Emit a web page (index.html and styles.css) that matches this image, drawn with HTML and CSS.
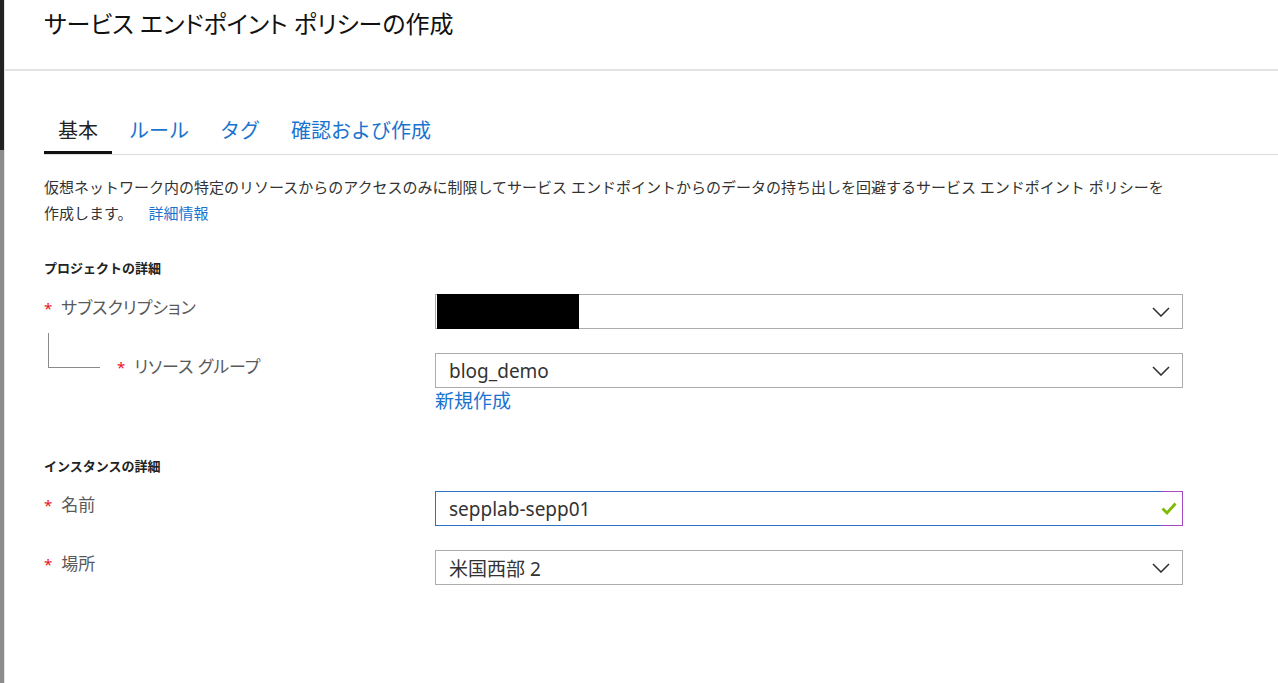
FILE: index.html
```html
<!DOCTYPE html>
<html lang="ja">
<head>
    <meta charset="UTF-8">
    <meta name="viewport" content="width=device-width, initial-scale=1.0">
    <title>サービス エンドポイント ポリシーの作成</title>
    <link rel="stylesheet" href="styles.css">
</head>
<body>
    <div class="frame">
        <div class="edge"></div>

        <div class="blade">
            <header class="blade-header">
                <h1>サービス エンドポイント ポリシーの作成</h1>
            </header>

            <div class="blade-body">
                <nav class="tabs">
                    <a class="tab active">基本</a>
                    <a class="tab">ルール</a>
                    <a class="tab">タグ</a>
                    <a class="tab">確認および作成</a>
                </nav>

                <p class="intro">
                    仮想ネットワーク内の特定のリソースからのアクセスのみに制限してサービス エンドポイントからのデータの持ち出しを回避するサービス エンドポイント ポリシーを作成します。<a class="link more-link">詳細情報</a>
                </p>

                <h2 class="section-title">プロジェクトの詳細</h2>

                <div class="form-row first">
                    <div class="field-label">
                        <span class="label-text"><span class="req">*</span>サブスクリプション</span>
                    </div>
                    <div class="select">
                        <span class="redact"></span>
                        <svg class="chevron" width="18" height="10" viewBox="0 0 18 10"><polyline points="1,1 9,9 17,1"/></svg>
                    </div>
                </div>

                <div class="form-row">
                    <div class="field-label">
                        <span class="tree"></span>
                        <span class="label-text"><span class="req">*</span>リソース グループ</span>
                    </div>
                    <div class="control">
                        <div class="select">
                            <span>blog_demo</span>
                            <svg class="chevron" width="18" height="10" viewBox="0 0 18 10"><polyline points="1,1 9,9 17,1"/></svg>
                        </div>
                        <a class="link new-link">新規作成</a>
                    </div>
                </div>

                <h2 class="section-title second">インスタンスの詳細</h2>

                <div class="form-row tight">
                    <div class="field-label">
                        <span class="label-text"><span class="req">*</span>名前</span>
                    </div>
                    <div class="text-field">
                        <span class="value">sepplab-sepp01</span>
                        <span class="valid-mark">
                            <svg width="16" height="13" viewBox="0 0 16 13"><polyline points="1.5,6.5 6,11 14.5,1.5"/></svg>
                        </span>
                    </div>
                </div>

                <div class="form-row">
                    <div class="field-label">
                        <span class="label-text"><span class="req">*</span>場所</span>
                    </div>
                    <div class="select">
                        <span>米国西部 2</span>
                        <svg class="chevron" width="18" height="10" viewBox="0 0 18 10"><polyline points="1,1 9,9 17,1"/></svg>
                    </div>
                </div>
            </div>
        </div>
    </div>
</body>
</html>
```

FILE: styles.css
```css
* {
    margin: 0;
    padding: 0;
    box-sizing: border-box;
    font-family: "Noto Sans", "Noto Sans CJK JP", sans-serif;
}

body {
    background-color: white;
    color: #222;
}

.frame {
    display: flex;
    min-height: 100vh;
}

/* bord gauche de la fenêtre */
.edge {
    width: 5px;
    flex-shrink: 0;
    background: linear-gradient(#222 0 150px, #8c8c8c 150px);
    border-right: 1px solid #e4e4e4;
}

.blade {
    flex: 1;
}

.blade-header {
    height: 71px;
    padding: 8px 0 0 39px;
    border-bottom: 2px solid #e3e3e3;
}

.blade-header h1 {
    font-size: 24px;
    font-weight: normal;
    line-height: 32px;
    color: #111;
    font-feature-settings: "palt";
}

.blade-body {
    padding-left: 39px;
}

/* onglets */
.tabs {
    display: flex;
    margin-top: 38px;
    border-bottom: 1px solid #dcdcdc;
}

.tab {
    font-size: 20px;
    line-height: 28px;
    padding: 8px 14px 6px;
    margin-right: 3px;
    color: #1a73d0;
    border-bottom: 3px solid transparent;
}

.tab.active {
    color: #222;
    border-bottom-color: #111;
}

.intro {
    margin-top: 19px;
    max-width: 1130px;
    font-size: 15px;
    line-height: 26px;
    color: #333;
}

.link {
    color: #1a73d0;
}

.more-link {
    margin-left: 16px;
}

.section-title {
    margin-top: 32px;
    font-size: 13px;
    font-weight: bold;
    line-height: 20px;
    color: #222;
}

.section-title.second {
    margin-top: 42px;
}

/* lignes du formulaire */
.form-row {
    display: flex;
    margin-top: 24px;
}

.form-row.first {
    margin-top: 16px;
}

.form-row.tight {
    margin-top: 15px;
}

.field-label {
    display: flex;
    width: 391px;
    flex-shrink: 0;
}

.label-text {
    padding-top: 3px;
    font-size: 17px;
    line-height: 22px;
    color: #595959;
    font-feature-settings: "palt";
}

.req {
    font-size: 15px;
    color: #e81123;
    margin-right: 9px;
}

.tree {
    width: 52px;
    height: 35px;
    margin: -20px 17px 0 4px;
    border-left: 1px solid #8a8a8a;
    border-bottom: 1px solid #8a8a8a;
}

.control {
    display: flex;
    flex-direction: column;
}

.select {
    display: flex;
    align-items: center;
    justify-content: space-between;
    width: 748px;
    height: 35px;
    padding: 0 12px 0 13px;
    border: 1px solid #acacac;
    font-size: 19px;
    color: #333;
}

.redact {
    align-self: stretch;
    width: 142px;
    margin: -1px 0 -1px -12px;
    background-color: #000;
}

.chevron polyline {
    fill: none;
    stroke: #333;
    stroke-width: 1.6;
}

.new-link {
    font-size: 19px;
    line-height: 26px;
}

.text-field {
    display: flex;
    width: 748px;
    height: 35px;
    font-size: 19px;
    color: #333;
}

.text-field .value {
    flex: 1;
    display: flex;
    align-items: center;
    padding-left: 13px;
    border: 1px solid #2b72c4;
    border-right: none;
}

.valid-mark {
    width: 22px;
    display: flex;
    align-items: center;
    justify-content: flex-start;
    border: 1px solid #a44bc4;
    border-left: none;
}

.valid-mark polyline {
    fill: none;
    stroke: #7fba00;
    stroke-width: 2.8;
}
```
